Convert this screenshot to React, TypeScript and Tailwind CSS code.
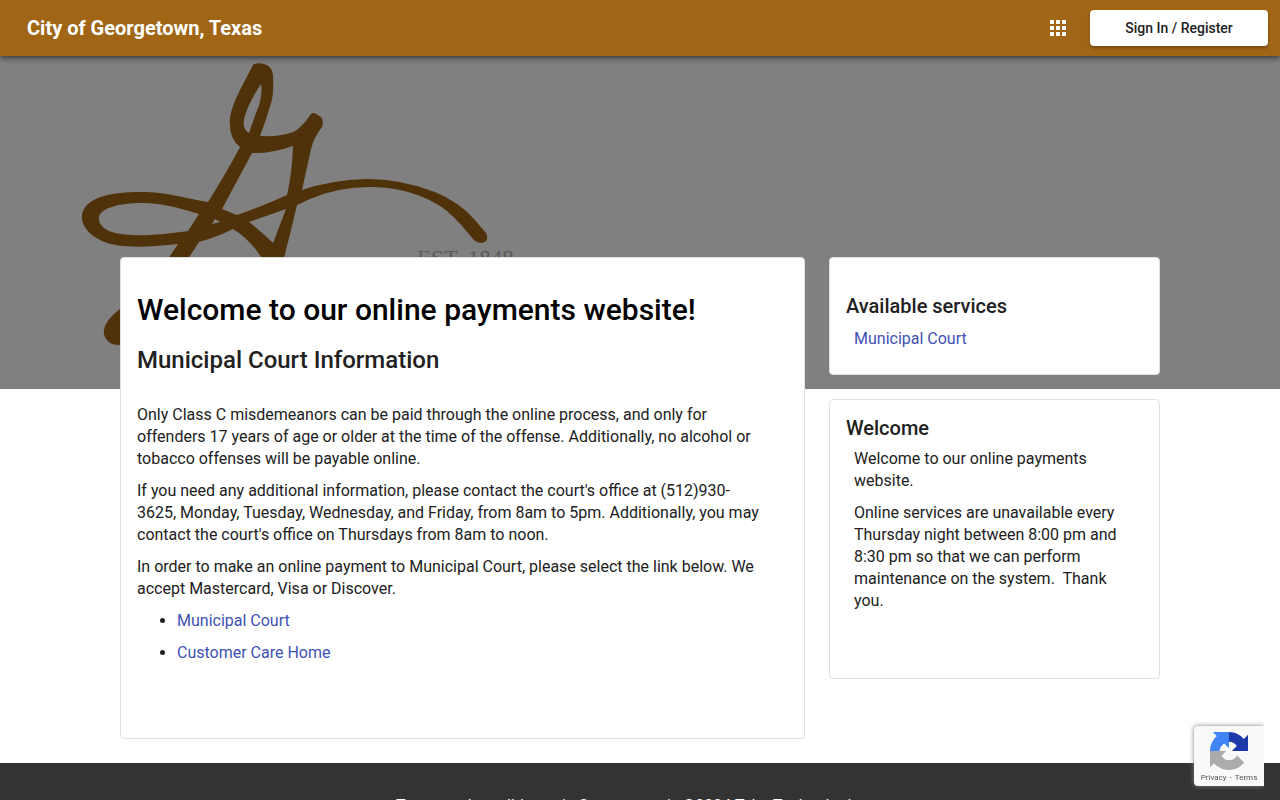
import type { ReactNode } from "react";

function Wordmark() {
  return (
    <svg
      className="absolute left-0 top-0 h-[389px] w-[600px]"
      viewBox="0 0 600 389"
      fill="none"
      aria-hidden="true"
    >
      <g fill="#50320a" fillRule="evenodd">
        <path d="M253 65Q257 62 264 64Q272 66 273 75Q274 95 271 103Q266 121 260 136Q281 137 293 132Q298 130 305 122L311 114Q313 112 316 114L321 117Q324 121 322 127Q314 137 311 149L302 190Q331 180 366 179Q402 179 435 192Q459 202 474 219L486 233Q490 242 481 243Q477 243 474 240L462 226Q447 209 435 203Q406 187 370 187Q338 187 310 199L297 205L291 230Q286 250 281 270L268 270Q264 260 259 254Q248 238 233 229Q217 237 199 242C180 272 145 320 130 343Q118 347 110 343Q101 336 105 326Q112 311 136 300Q153 282 178 244C150 247 120 249 102 241C82 232 76 215 88 204C102 192 128 192 146 192C170 193 188 199 208 202Q228 170 240 147Q228 138 230 117Q232 106 240 90ZM261 84C250 101 242 118 244 126Q245 131 249 133L256 113Q263 98 261 84ZM252 153L222 209L237 215Q258 208 287 195Q292 174 293 146Q270 154 252 153ZM199 214Q165 203 143 203C110 203 94 212 100 223C106 237 140 238 188 231ZM286 209L249 222Q262 232 273 243ZM215 219L212 224L220 222Z" />
      </g>
      <text x="417" y="266" fontSize="23" fill="#575c5f" fontFamily="Liberation Serif, serif">
        EST. 1848
      </text>
    </svg>
  );
}

function AppsIcon() {
  return (
    <svg viewBox="0 0 24 24" className="size-6" fill="currentColor" aria-hidden="true">
      <path d="M4 8h4V4H4zm6 12h4v-4h-4zm-6 0h4v-4H4zm0-6h4v-4H4zm6 0h4v-4h-4zm6-10v4h4V4zm-6 4h4V4h-4zm6 6h4v-4h-4zm0 6h4v-4h-4z" />
    </svg>
  );
}

function RecaptchaLogo() {
  return (
    <svg viewBox="0 0 64 64" className="size-[38px]" aria-hidden="true">
      <path
        fill="#1c3aa9"
        d="M64 31.955l-.033-1.37V4.687l-7.16 7.16C50.948 4.674 42.033.093 32.05.093c-10.4 0-19.622 4.96-25.458 12.64l11.736 11.86a15.55 15.55 0 0 1 4.754-5.334c2.05-1.6 4.952-2.906 8.968-2.906.485 0 .86.057 1.135.163 4.976.393 9.288 3.14 11.828 7.124l-8.307 8.307L64 31.953"
      />
      <path
        fill="#4285f4"
        d="M31.862.094l-1.37.033H4.594l7.16 7.16C4.58 13.147 0 22.06 0 32.046c0 10.4 4.96 19.622 12.64 25.458L24.5 45.768a15.55 15.55 0 0 1-5.334-4.754c-1.6-2.05-2.906-4.952-2.906-8.968 0-.485.057-.86.163-1.135.393-4.976 3.14-9.288 7.124-11.828l8.307 8.307L31.86.095"
      />
      <path
        fill="#ababab"
        d="M.001 32.045l.033 1.37v25.898l7.16-7.16c5.86 7.173 14.774 11.754 24.76 11.754 10.4 0 19.622-4.96 25.458-12.64l-11.736-11.86a15.55 15.55 0 0 1-4.754 5.334c-2.05 1.6-4.952 2.906-8.968 2.906-.485 0-.86-.057-1.135-.163-4.976-.393-9.288-3.14-11.828-7.124l8.307-8.307c-10.522.04-22.4.066-27.295-.005"
      />
    </svg>
  );
}

function Card({ className, children }: { className: string; children: ReactNode }) {
  return (
    <section className={`rounded border border-[#e0e0e0] bg-white px-4 ${className}`}>
      {children}
    </section>
  );
}

const link = "text-[#3f51b5] hover:underline";

export default function App() {
  return (
    <div className="relative min-h-screen overflow-x-clip bg-white font-['Roboto',sans-serif] text-base leading-[22px] text-[#212121]">
      <header className="relative z-10 flex h-14 items-center justify-between bg-[#a06616] pr-3 pl-[27px] text-white shadow-[0_2px_4px_-1px_rgba(0,0,0,0.4),0_4px_5px_rgba(0,0,0,0.24)]">
        <div className="text-xl font-bold">City of Georgetown, Texas</div>
        <div className="flex items-center gap-5">
          <button type="button" aria-label="Apps">
            <AppsIcon />
          </button>
          <button
            type="button"
            className="h-9 w-[178px] rounded bg-white text-sm font-medium text-[#212121] shadow-[0_2px_3px_rgba(0,0,0,0.3)]"
          >
            Sign In / Register
          </button>
        </div>
      </header>

      <div className="absolute inset-x-0 top-0 h-[389px] overflow-hidden bg-[#808080]">
        <Wordmark />
      </div>

      <main className="relative mx-auto mt-[201px] flex max-w-[1040px] items-start gap-6">
        <Card className="min-w-0 flex-1 pt-8 pb-[74px]">
          <h1 className="text-3xl leading-10 font-medium text-black">
            Welcome to our online payments website!
          </h1>
          <h2 className="mt-[14px] text-2xl leading-8 font-medium">Municipal Court Information</h2>
          <div className="mt-7 flex max-w-[624px] flex-col gap-[10px]">
            <p>
              Only Class C misdemeanors can be paid through the online process, and only for
              offenders 17 years of age or older at the time of the offense. Additionally, no
              alcohol or tobacco offenses will be payable online.
            </p>
            <p>
              If you need any additional information, please contact the court's office at
              (512)930-3625, Monday, Tuesday, Wednesday, and Friday, from 8am to 5pm. Additionally,
              you may contact the court's office on Thursdays from 8am to noon.
            </p>
            <p>
              In order to make an online payment to Municipal Court, please select the link below.
              We accept Mastercard, Visa or Discover.
            </p>
            <ul className="flex list-disc flex-col gap-[10px] pl-10">
              <li>
                <a href="#court" className={link}>
                  Municipal Court
                </a>
              </li>
              <li>
                <a href="#care" className={link}>
                  Customer Care Home
                </a>
              </li>
            </ul>
          </div>
        </Card>

        <aside className="flex w-[331px] shrink-0 flex-col gap-6">
          <Card className="pt-8 pb-6">
            <h2 className="text-xl leading-8 font-medium">Available services</h2>
            <p className="mt-[6px] px-2">
              <a href="#services" className={link}>
                Municipal Court
              </a>
            </p>
          </Card>
          <Card className="pt-3 pb-[66px]">
            <h2 className="text-xl leading-8 font-medium">Welcome</h2>
            <div className="mt-1 flex flex-col gap-[10px] px-2">
              <p>Welcome to our online payments website.</p>
              <p>
                Online services are unavailable every Thursday night between 8:00 pm and 8:30 pm so
                that we can perform maintenance on the system.&nbsp; Thank you.
              </p>
            </div>
          </Card>
        </aside>
      </main>

      <footer className="mt-6 flex h-[37px] justify-center gap-3 overflow-hidden bg-[#333333] pt-8 pr-4 text-white">
        <a href="#terms">Terms and conditions</a>
        <span>|</span>
        <a href="#contact">Contact us</a>
        <span>|</span>
        <span>©2024 Tyler Technologies</span>
      </footer>

      <div className="fixed right-4 bottom-[14px] flex h-[60px] w-[70px] flex-col items-center rounded-l-sm bg-[#f9f9f9] pt-[6px] shadow-[0_0_5px_gray] [clip-path:inset(-6px_0_-6px_-6px)]">
        <RecaptchaLogo />
        <div className="mt-[2px] flex gap-[3px] text-[8px] leading-3 text-[#555555]">
          <a href="#privacy">Privacy</a>
          <span>-</span>
          <a href="#terms-of-use">Terms</a>
        </div>
      </div>
    </div>
  );
}
